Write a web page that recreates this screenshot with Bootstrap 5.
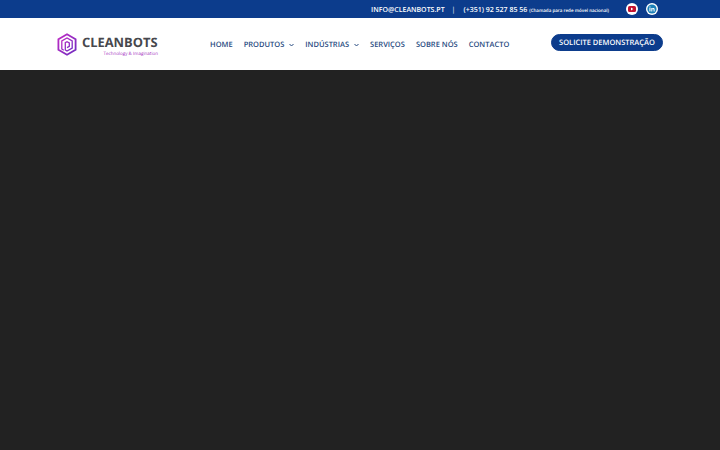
<!DOCTYPE html>
<html lang="pt">
  <head>
    <meta charset="UTF-8" />
    <meta name="viewport" content="width=device-width, initial-scale=1.0" />
    <title>Cleanbots</title>
    <link
      href="https://cdn.jsdelivr.net/npm/bootstrap@5.3.3/dist/css/bootstrap.min.css"
      rel="stylesheet"
    />
    <style>
      html, body {
        height: 100%;
      }
      body {
        font-family: "Open Sans", sans-serif;
        background-color: #222222;
        overflow: hidden;
        text-rendering: geometricPrecision;
      }
      .top-strip {
        height: 18px;
        background-color: #0c3c8c;
        color: #fff;
        font-size: 7px;
        font-weight: 600;
        padding-right: 62px;
      }
      .strip-text {
        padding-top: 4px;
      }
      .top-strip .sep {
        margin: 0 8px 0 7px;
        font-weight: 400;
      }
      .top-strip .tiny {
        font-size: 4.5px;
        margin-left: 2px;
      }
      .social-links {
        margin-left: 17px;
        gap: 8px;
      }
      .social-dot {
        width: 12px;
        height: 12px;
        display: block;
      }
      .main-head {
        height: 52px;
        background-color: #fff;
        padding-left: 57px;
        padding-right: 57px;
      }
      .brand-box {
        width: 101px;
        margin-right: 52px;
      }
      .brand-text {
        margin-left: 5px;
      }
      .brand-name {
        font-size: 12.9px;
        font-weight: 700;
        color: #47474d;
        line-height: 14px;
        padding-top: 4px;
        white-space: nowrap;
      }
      .brand-sub {
        font-size: 4.5px;
        color: #a32fc0;
        line-height: 6px;
        margin-top: 2px;
        text-align: right;
        white-space: nowrap;
      }
      .menu-links {
        gap: 11px;
      }
      .menu-links a {
        font-size: 7.5px;
        font-weight: 600;
        color: #274a80;
        text-decoration: none;
        white-space: nowrap;
        padding-top: 4px;
      }
      .menu-links svg {
        margin-left: 5px;
        vertical-align: 0;
      }
      .demo-btn {
        --bs-btn-bg: #0c3c8c;
        --bs-btn-color: #fff;
        --bs-btn-border-color: #0c3c8c;
        --bs-btn-padding-x: 7px;
        --bs-btn-padding-y: 0;
        --bs-btn-font-size: 7.5px;
        --bs-btn-font-weight: 600;
        --bs-btn-line-height: 16px;
        --bs-btn-border-radius: 9px;
        width: 112px;
        height: 17px;
        margin-top: -4px;
        white-space: nowrap;
      }
    </style>
  </head>
  <body>
    <div class="top-strip d-flex align-items-center justify-content-end">
      <span class="strip-text">INFO@CLEANBOTS.PT</span>
      <span class="strip-text sep">|</span>
      <span class="strip-text">(+351) 92 527 85 56<span class="tiny">(Chamada para rede móvel nacional)</span></span>
      <span class="social-links d-flex">
        <svg class="social-dot" viewBox="0 0 12 12">
          <circle cx="6" cy="6" r="6" fill="#fff" />
          <rect x="2" y="3" width="8" height="6" rx="1.6" fill="#c4122f" />
          <path d="M5 4.600 7.300 6 5 7.400z" fill="#fff" />
        </svg>
        <svg class="social-dot" viewBox="0 0 12 12">
          <circle cx="6" cy="6" r="6" fill="#fff" />
          <circle cx="6" cy="6" r="4.600" fill="#1a7fb8" />
          <rect x="3.400" y="5" width="1.100" height="3.400" fill="#fff" />
          <rect x="3.400" y="3.500" width="1.100" height="1" fill="#fff" />
          <path d="M5.300 5h1v.5c.5-.7 2.300-.9 2.300.9v2H7.600V6.700c0-.9-1.300-.9-1.300 0v1.700h-1z" fill="#fff" />
        </svg>
      </span>
    </div>
    <div class="main-head d-flex align-items-center">
      <div class="brand-box d-flex align-items-center flex-shrink-0">
        <svg width="20" height="23" viewBox="0 0 20 23" class="flex-shrink-0">
          <defs>
            <linearGradient id="logoGrad" x1="0" y1="0" x2="1" y2="1">
              <stop offset="0" stop-color="#c02bc4" />
              <stop offset="1" stop-color="#6f2cc0" />
            </linearGradient>
          </defs>
          <path d="M10 1.200 18.600 6.200V16.800L10 21.800 1.400 16.800V6.200z" fill="none" stroke="url(#logoGrad)" stroke-width="1.800" />
          <path d="M6.800 17.200 4.800 16V8L10 5 15.200 8V15L10 18 8.300 17V9.700L10 8.700 12.300 10V13.300L10 14.600" fill="none" stroke="url(#logoGrad)" stroke-width="1.300" />
        </svg>
        <div class="brand-text flex-grow-1">
          <div class="brand-name">CLEANBOTS</div>
          <div class="brand-sub">Technology &amp; Imagination</div>
        </div>
      </div>
      <nav class="menu-links d-flex align-items-center">
        <a href="#">HOME</a>
        <a href="#">PRODUTOS<svg width="5" height="4" viewBox="0 0 5 4"><path d="M.5 1 2.500 3 4.500 1" fill="none" stroke="#274a80" /></svg></a>
        <a href="#">INDÚSTRIAS<svg width="5" height="4" viewBox="0 0 5 4"><path d="M.5 1 2.500 3 4.500 1" fill="none" stroke="#274a80" /></svg></a>
        <a href="#">SERVIÇOS</a>
        <a href="#">SOBRE NÓS</a>
        <a href="#">CONTACTO</a>
      </nav>
      <a href="#" class="btn demo-btn ms-auto flex-shrink-0">SOLICITE DEMONSTRAÇÃO</a>
    </div>
    <script src="https://cdn.jsdelivr.net/npm/bootstrap@5.3.3/dist/js/bootstrap.bundle.min.js"></script>
  </body>
</html>
